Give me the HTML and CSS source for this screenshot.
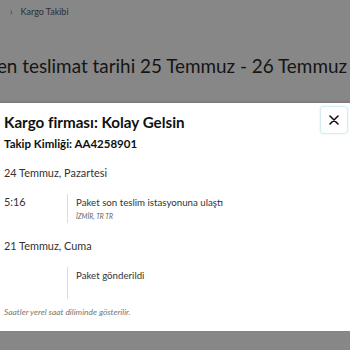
FILE: index.html
```html
<!DOCTYPE html>
<html lang="tr">
<head>
<meta charset="utf-8">
<link rel="stylesheet" href="styles.css">
</head>
<body>
<div class="page">
  <nav class="crumbs"><span class="sep">›</span><span class="crumb">Kargo Takibi</span></nav>
  <div class="headline"><h1>Öngörülen teslimat tarihi 25 Temmuz - 26 Temmuz</h1></div>
</div>
<div class="modal">
  <div class="modal-head">
    <div class="titles">
      <h2 class="carrier">Kargo firması: Kolay Gelsin</h2>
      <h3 class="tracking">Takip Kimliği: AA4258901</h3>
    </div>
    <button class="close" aria-label="Kapat">
      <svg width="10" height="10" viewBox="0 0 10 10"><path d="M1 1L9 9M9 1L1 9" stroke="#111" stroke-width="1.6" stroke-linecap="round"/></svg>
    </button>
  </div>
  <div class="day">24 Temmuz, Pazartesi</div>
  <div class="event">
    <div class="time">5:16</div>
    <div class="detail">
      <div class="desc">Paket son teslim istasyonuna ulaştı</div>
      <div class="loc">İZMİR, TR TR</div>
    </div>
  </div>
  <div class="day">21 Temmuz, Cuma</div>
  <div class="event">
    <div class="time"></div>
    <div class="detail tall">
      <div class="desc">Paket gönderildi</div>
    </div>
  </div>
  <p class="note">Saatler yerel saat diliminde gösterilir.</p>
</div>
</body>
</html>
```
FILE: styles.css
```css
* { box-sizing: border-box; }
html, body { margin: 0; padding: 0; }
body {
  width: 350px;
  height: 350px;
  overflow: hidden;
  background: #878787;
  font-family: "Lato", "Noto Sans", sans-serif;
  color: #0f1111;
}
.page { height: 103px; overflow: hidden; }
.crumbs {
  display: flex;
  align-items: center;
  gap: 8px;
  padding: 2px 0 0 10px;
  height: 20px;
  font-size: 9px;
  color: #333;
}
.sep { font-size: 9px; color: #333; }
.crumb { color: #2a3038; }
.headline {
  display: flex;
  justify-content: flex-end;
  padding: 32px 3px 0 0;
  overflow: hidden;
}
.headline h1 {
  margin: 0;
  white-space: nowrap;
  font-size: 18.9px;
  font-weight: 400;
  color: #151515;
  line-height: 28px;
}
.modal {
  background: #fff;
  height: 228px;
  padding: 3px 2px 0 4px;
  box-shadow: 0 -1px 2px rgba(0,0,0,0.15);
}
.modal-head { display: flex; justify-content: space-between; align-items: flex-start; }
.carrier {
  margin: 5px 0 0 0;
  font-size: 15.2px;
  font-weight: 700;
  line-height: 22px;
  color: #0f1111;
}
.tracking {
  margin: 2px 0 0 0;
  font-size: 11.5px;
  font-weight: 700;
  line-height: 18px;
  color: #0f1111;
}
.close {
  width: 28px;
  height: 28px;
  border: 1px solid #d5eef2;
  border-radius: 4px;
  background: #fff;
  box-shadow: 0 0 2px rgba(120,200,220,0.35);
  display: flex;
  align-items: center;
  justify-content: center;
  padding: 0;
}
.day {
  margin-top: 12px;
  font-size: 10.9px;
  line-height: 16px;
  color: #333;
}
.event + .day { margin-top: 15px; }
.event { display: flex; margin-top: 13px; }
.time {
  width: 63px;
  font-size: 10.9px;
  line-height: 16px;
  color: #333;
}
.detail {
  border-left: 1px solid #ddd;
  padding: 0 0 1px 8px;
}
.detail.tall { min-height: 32px; }
.desc { font-size: 9.7px; line-height: 16px; color: #333; }
.loc { font-size: 6.8px; font-style: italic; color: #666; line-height: 12px; }
.note {
  margin: 8px 0 0 0;
  font-size: 8.4px;
  line-height: 11px;
  font-style: italic;
  color: #777;
}
```
